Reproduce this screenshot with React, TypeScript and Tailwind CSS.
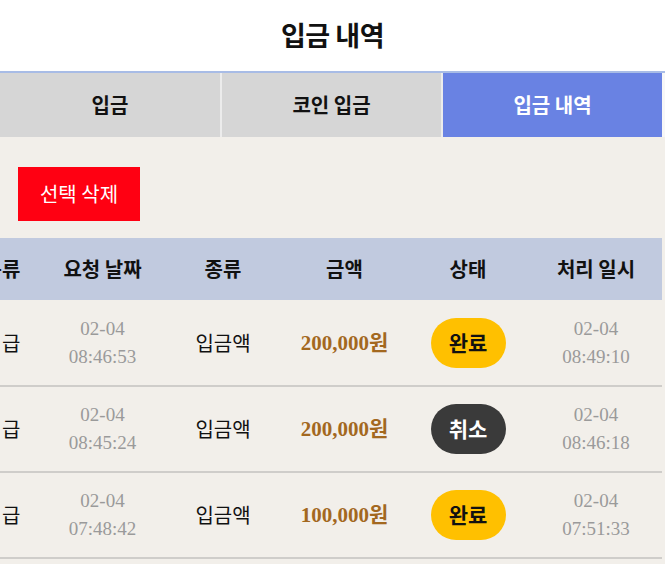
import React from 'react';

const ROWS = [
  { kind: '지급', req: ['02-04', '08:46:53'], type: '입금액', amount: '200,000', status: 'done', done: ['02-04', '08:49:10'] },
  { kind: '지급', req: ['02-04', '08:45:24'], type: '입금액', amount: '200,000', status: 'cancel', done: ['02-04', '08:46:18'] },
  { kind: '지급', req: ['02-04', '07:48:42'], type: '입금액', amount: '100,000', status: 'done', done: ['02-04', '07:51:33'] },
  { kind: '지급', req: ['02-04', '07:20:11'], type: '입금액', amount: '50,000', status: 'done', done: ['02-04', '07:22:40'] },
];

const KR = "font-['Noto_Sans_CJK_KR','Noto_Sans',sans-serif]";
const SERIF = "font-['Liberation_Serif','Noto_Sans_CJK_KR',serif]";

export default function App() {
  return (
    <div className={`w-[665px] h-[564px] overflow-hidden bg-[#f2efea] ${KR}`}>
      {/* Header */}
      <header className="h-[71px] bg-white flex items-center justify-center">
        <h1 className="text-[27px] font-bold text-[#111] tracking-[-0.5px]">입금 내역</h1>
      </header>

      {/* Tabs */}
      <nav className="flex h-[66px] border-t-2 border-[#a8bce6] bg-[#f7f7f7] pr-[3px]">
        <div className="w-[220px] flex items-center justify-center bg-[#d6d6d6] text-[20px] font-semibold text-[#111]">입금</div>
        <div className="w-[2px] bg-[#ececec]" />
        <div className="w-[219px] flex items-center justify-center bg-[#d6d6d6] text-[20px] font-semibold text-[#111]">코인 입금</div>
        <div className="w-[2px] bg-[#ececec]" />
        <div className="flex-1 flex items-center justify-center bg-[#6982e3] text-[20px] font-semibold text-white">입금 내역</div>
      </nav>

      {/* Actions */}
      <div className="pt-[30px] pl-[18px] pb-[17px]">
        <button className="w-[122px] h-[54px] bg-[#ff0012] text-white text-[20px]">선택 삭제</button>
      </div>

      {/* Table: scrolled sideways, first column is partly hidden */}
      <div className="overflow-hidden">
        <table className="table-fixed border-collapse ml-[-38px] w-[700px]">
          <colgroup>
            <col className="w-[80px]" />
            <col className="w-[121px]" />
            <col className="w-[120px]" />
            <col className="w-[123px]" />
            <col className="w-[124px]" />
            <col className="w-[132px]" />
          </colgroup>
          <thead>
            <tr className="h-[62px] bg-[#c1cadf] text-[20px] font-bold text-[#111]">
              <th>분류</th>
              <th>요청 날짜</th>
              <th>종류</th>
              <th>금액</th>
              <th>상태</th>
              <th>처리 일시</th>
            </tr>
          </thead>
          <tbody>
            {ROWS.map((r, i) => (
              <tr key={i} className="h-[86px] border-b-2 border-[#cfcdca] text-center">
                <td className="text-[20px] text-[#111]">{r.kind}</td>
                <td className={`${SERIF} text-[19px] leading-[28px] text-[#9a9a9a]`}>
                  {r.req[0]}
                  <br />
                  {r.req[1]}
                </td>
                <td className="text-[20px] text-[#111]">{r.type}</td>
                <td className={`${SERIF} text-[21px] font-bold text-[#a3681f]`}>
                  {r.amount}
                  <span className={KR}>원</span>
                </td>
                <td>
                  <span
                    className={
                      r.status === 'done'
                        ? 'inline-flex items-center justify-center w-[75px] h-[50px] rounded-full bg-[#ffc000] text-[21px] font-bold text-[#111]'
                        : 'inline-flex items-center justify-center w-[75px] h-[50px] rounded-full bg-[#3a3a3a] text-[21px] font-bold text-white'
                    }
                  >
                    {r.status === 'done' ? '완료' : '취소'}
                  </span>
                </td>
                <td className={`${SERIF} text-[19px] leading-[28px] text-[#9a9a9a]`}>
                  {r.done[0]}
                  <br />
                  {r.done[1]}
                </td>
              </tr>
            ))}
          </tbody>
        </table>
      </div>
    </div>
  );
}
